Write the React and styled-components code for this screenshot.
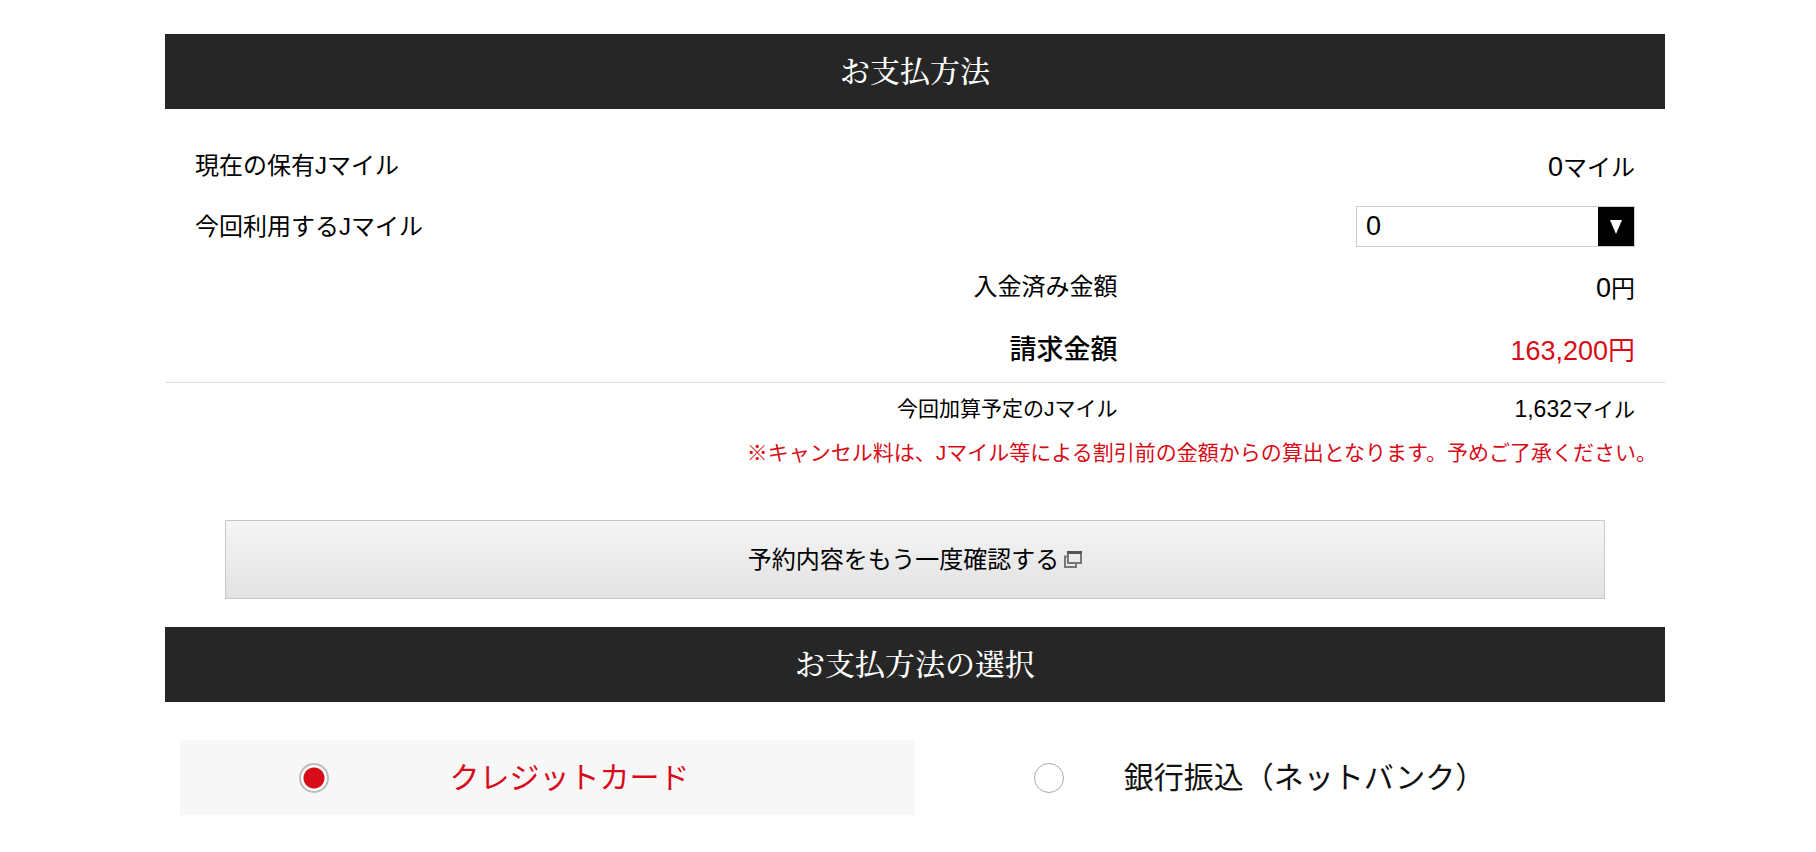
import React, { useState } from "react";
import styled, { createGlobalStyle } from "styled-components";

const GlobalStyle = createGlobalStyle`
  * {
    box-sizing: border-box;
  }
  body {
    margin: 0;
    background: #fff;
    color: #000;
    font-family: "Liberation Sans", "Noto Sans CJK JP", sans-serif;
  }
`;

const Container = styled.main`
  padding: 34px 151px 36px 165px;
`;

const Title = styled.h2`
  margin: 0;
  padding: 13px 0 18px;
  background: #262626;
  color: #fff;
  font-family: "Noto Serif CJK JP", "Liberation Serif", "Noto Sans CJK JP", serif;
  font-size: 30px;
  font-weight: 500;
  line-height: 44px;
  text-align: center;
`;

const Miles = styled.div`
  padding: 26px 30px 0;
`;

const Row = styled.div`
  display: flex;
  align-items: center;
  justify-content: space-between;
  height: ${(props) => props.$height};
  font-size: 24px;
`;

const Label = styled.label`
  padding-bottom: 4px;
`;

const SelectBox = styled.div`
  display: flex;
  position: relative;
  width: 279px;
  height: 41px;
  border: 1px solid #ccc;
`;

const Select = styled.select`
  flex: 1;
  padding: 0 9px;
  border: none;
  outline: none;
  appearance: none;
  background: #fff;
  color: #000;
  font-family: inherit;
  font-size: 27px;
  cursor: pointer;
`;

const Arrow = styled.span`
  position: absolute;
  top: 0;
  right: 0;
  display: flex;
  align-items: center;
  justify-content: center;
  width: 36px;
  height: 100%;
  padding-top: 2px;
  background: #000;
  pointer-events: none;
`;

const Amounts = styled.dl`
  margin: 0;
`;

const AmountRow = styled.div`
  display: grid;
  grid-template-columns: 65% 1fr;
  align-items: center;
  height: ${(props) => props.$height};
  padding-right: 30px;
  border-bottom: ${(props) => (props.$line ? "1px solid #ddd" : "none")};
  font-size: ${(props) => props.$size};
  text-align: right;
`;

const Term = styled.dt`
  padding: 0 3px 3px 0;
  font-weight: ${(props) => (props.$strong ? 500 : 400)};
`;

const Value = styled.dd`
  margin: 0;
  color: ${(props) => (props.$red ? "#d70c18" : "#000")};
`;

const Num = styled.span`
  font-size: ${(props) => props.$size || "27px"};
`;

const Note = styled.p`
  margin: 0;
  padding: 4px 8px 0 0;
  color: #d70c18;
  font-size: 21px;
  line-height: 32px;
  text-align: right;
`;

const Confirm = styled.button`
  display: flex;
  align-items: center;
  justify-content: center;
  gap: 5px;
  width: calc(100% - 120px);
  height: 79px;
  margin: 51px 60px 28px;
  padding: 0;
  border: 1px solid #c8c8c8;
  background: linear-gradient(#f5f5f5, #e2e2e2);
  color: #000;
  font-family: inherit;
  font-size: 24px;
  cursor: pointer;
`;

const ConfirmText = styled.span`
  padding-bottom: 4px;
`;

const Options = styled.div`
  display: grid;
  grid-template-columns: 1fr 1fr;
  padding: 38px 15px 0;
`;

const Option = styled.label`
  display: flex;
  align-items: center;
  height: 75px;
  padding: 0 105px 0 119px;
  background: ${(props) => (props.$active ? "#f7f7f7" : "#fff")};
  color: ${(props) => (props.$active ? "#d70c18" : "#111")};
  font-size: 30px;
  cursor: pointer;
`;

const Radio = styled.input`
  flex: none;
  width: 30px;
  height: 30px;
  margin: 0;
  border: 1px solid #aaa;
  border-radius: 50%;
  appearance: none;
  background: #fff;
  cursor: pointer;

  &:checked {
    border: 2px solid #bbb;
    background: radial-gradient(circle, #d70c18 10px, #fff 11px);
  }
`;

const OptionText = styled.span`
  flex: 1;
  padding-bottom: 5px;
  text-align: center;
  white-space: nowrap;
`;

const WindowIcon = () => (
  <svg width="18" height="17" viewBox="0 0 18 17" fill="none" aria-hidden="true">
    <path d="M4 5.5H1V16h11v-3" stroke="#777" strokeWidth="2" />
    <path d="M4 1v11h13V1" stroke="#777" strokeWidth="2" />
    <path d="M3 1.5h15" stroke="#555" strokeWidth="3" />
  </svg>
);

const methods = [
  { id: "card", label: "クレジットカード" },
  { id: "bank", label: "銀行振込（ネットバンク）" },
];

const App = () => {
  const [method, setMethod] = useState("card");

  return (
    <Container>
      <GlobalStyle />
      <Title>お支払方法</Title>
      <Miles>
        <Row $height="60px">
          <Label as="span">現在の保有Jマイル</Label>
          <span>
            <Num>0</Num>マイル
          </span>
        </Row>
        <Row $height="62px">
          <Label htmlFor="miles">今回利用するJマイル</Label>
          <SelectBox>
            <Select id="miles">
              <option>0</option>
            </Select>
            <Arrow>
              <svg width="12" height="14" viewBox="0 0 12 14" aria-hidden="true">
                <path d="M0 0h12L6 14z" fill="#fff" />
              </svg>
            </Arrow>
          </SelectBox>
        </Row>
      </Miles>
      <Amounts>
        <AmountRow $height="58px" $size="24px">
          <Term>入金済み金額</Term>
          <Value>
            <Num>0</Num>円
          </Value>
        </AmountRow>
        <AmountRow $height="68px" $size="27px" $line>
          <Term $strong>請求金額</Term>
          <Value $red>
            <Num>163,200</Num>円
          </Value>
        </AmountRow>
        <AmountRow $height="50px" $size="21px">
          <Term>今回加算予定のJマイル</Term>
          <Value>
            <Num $size="23px">1,632</Num>マイル
          </Value>
        </AmountRow>
      </Amounts>
      <Note>
        ※キャンセル料は、Jマイル等による割引前の金額からの算出となります。予めご了承ください。
      </Note>
      <Confirm type="button">
        <ConfirmText>予約内容をもう一度確認する</ConfirmText>
        <WindowIcon />
      </Confirm>
      <Title>お支払方法の選択</Title>
      <Options>
        {methods.map((m) => (
          <Option key={m.id} $active={method === m.id}>
            <Radio
              type="radio"
              name="method"
              value={m.id}
              checked={method === m.id}
              onChange={() => setMethod(m.id)}
            />
            <OptionText>{m.label}</OptionText>
          </Option>
        ))}
      </Options>
    </Container>
  );
};

export default App;
